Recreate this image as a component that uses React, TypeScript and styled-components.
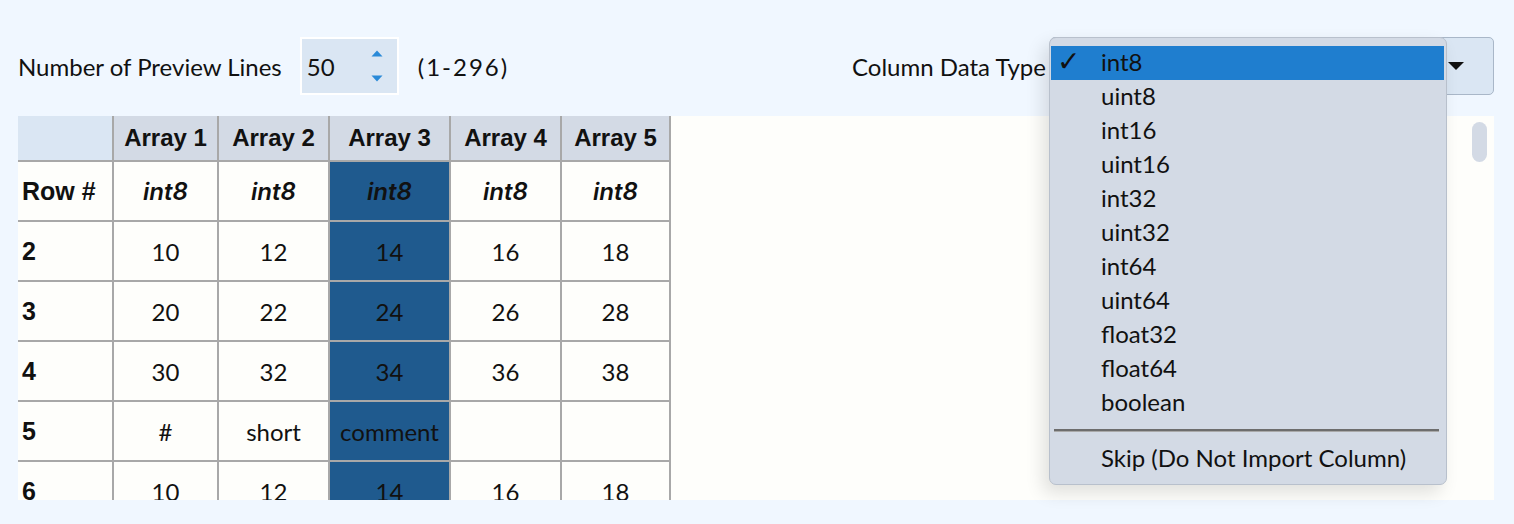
import React from "react";
import styled, { createGlobalStyle } from "styled-components";

const columns = ["Array 1", "Array 2", "Array 3", "Array 4", "Array 5"];
const columnWidths = [95, 105, 111, 121, 111, 109];
const selectedColumn = 2;

const rows: { id: string; values: string[] }[] = [
  { id: "2", values: ["10", "12", "14", "16", "18"] },
  { id: "3", values: ["20", "22", "24", "26", "28"] },
  { id: "4", values: ["30", "32", "34", "36", "38"] },
  { id: "5", values: ["#", "short", "comment", "", ""] },
  { id: "6", values: ["10", "12", "14", "16", "18"] },
];

const dataTypes = [
  "int8",
  "uint8",
  "int16",
  "uint16",
  "int32",
  "uint32",
  "int64",
  "uint64",
  "float32",
  "float64",
  "boolean",
];

const GlobalStyle = createGlobalStyle`
  html, body {
    margin: 0;
    padding: 0;
    background: #f0f7ff;
  }
  body {
    font-family: Lato, "Noto Sans", sans-serif;
    color: #111;
  }
`;

function App() {
  return (
    <Page>
      <GlobalStyle />
      <Toolbar>
        <Group>
          <Label>Number of Preview Lines</Label>
          <Spinner>
            <SpinnerValue>50</SpinnerValue>
            <SpinnerArrows>
              <svg width="14" height="34" viewBox="0 0 14 34">
                <path d="M1.5 7.5 L7 1.5 L12.5 7.5 Z" fill="#2a8ad8" />
                <path d="M1.5 26.5 L7 32.5 L12.5 26.5 Z" fill="#2a8ad8" />
              </svg>
            </SpinnerArrows>
          </Spinner>
          <Range>(1-296)</Range>
        </Group>
        <Group $gap={4}>
          <Label>Column Data Type</Label>
          <SelectWrap>
            <SelectBox>
              <svg width="16" height="8" viewBox="0 0 16 8">
                <path d="M0 0 L16 0 L8 8 Z" fill="#111" />
              </svg>
            </SelectBox>
            <Menu>
              {dataTypes.map((t, i) => (
                <MenuItem key={t} $active={i === 0}>
                  <Check>{i === 0 ? "✓" : ""}</Check>
                  {t}
                </MenuItem>
              ))}
              <Separator />
              <MenuItem>
                <Check />
                Skip (Do Not Import Column)
              </MenuItem>
            </Menu>
          </SelectWrap>
        </Group>
      </Toolbar>
      <Panel>
        <Table>
          <colgroup>
            {columnWidths.map((w, i) => (
              <col key={i} style={{ width: w }} />
            ))}
          </colgroup>
          <thead>
            <tr>
              <Corner />
              {columns.map((c) => (
                <HeadCell key={c}>{c}</HeadCell>
              ))}
            </tr>
          </thead>
          <tbody>
            <tr>
              <RowLabel>Row #</RowLabel>
              {columns.map((c, i) => (
                <TypeCell key={c} $selected={i === selectedColumn}>
                  int8
                </TypeCell>
              ))}
            </tr>
            {rows.map((r) => (
              <tr key={r.id}>
                <RowLabel>{r.id}</RowLabel>
                {r.values.map((v, i) => (
                  <Cell key={i} $selected={i === selectedColumn}>
                    {v}
                  </Cell>
                ))}
              </tr>
            ))}
          </tbody>
        </Table>
        <ScrollThumb />
      </Panel>
    </Page>
  );
}

const Page = styled.div`
  width: 1514px;
  height: 524px;
  overflow: hidden;
  background: #f0f7ff;
`;

const Toolbar = styled.div`
  display: flex;
  justify-content: space-between;
  align-items: center;
  padding: 37px 20px 0 18px;
  height: 58px;
  margin-bottom: 21px;
`;

const Group = styled.div<{ $gap?: number }>`
  display: flex;
  align-items: center;
  gap: ${(p) => p.$gap ?? 18}px;
`;

const Label = styled.span`
  font-size: 24px;
  color: #111;
`;

const Spinner = styled.div`
  box-sizing: border-box;
  width: 99px;
  height: 58px;
  border: 2px solid #ffffff;
  background: #dae6f3;
  display: flex;
  align-items: center;
  justify-content: space-between;
  padding: 0 13px 0 5px;
`;

const SpinnerValue = styled.span`
  font-size: 24px;
`;

const SpinnerArrows = styled.span`
  display: flex;
`;

const Range = styled.span`
  font-size: 24px;
  letter-spacing: 2px;
  margin-left: 1px;
`;

const SelectWrap = styled.div`
  position: relative;
`;

const SelectBox = styled.div`
  box-sizing: border-box;
  width: 444px;
  height: 58px;
  background: #dae6f3;
  border: 1px solid #a9b7c8;
  border-radius: 5px;
  display: flex;
  align-items: center;
  justify-content: flex-end;
  padding-right: 29px;
`;

const Menu = styled.div`
  position: absolute;
  left: -1px;
  top: 0;
  width: 398px;
  box-sizing: border-box;
  padding: 8px 2px 8px 1px;
  background: #d3dae5;
  border: 1px solid #b8c0cc;
  border-radius: 7px;
  box-shadow: -6px 8px 18px rgba(0, 0, 0, 0.12);
  z-index: 2;
`;

const MenuItem = styled.div<{ $active?: boolean }>`
  box-sizing: border-box;
  display: flex;
  align-items: center;
  height: 34px;
  padding-bottom: 3px;
  font-size: 24px;
  color: #111;
  background: ${(p) => (p.$active ? "#1f7ecf" : "transparent")};
`;

const Check = styled.span`
  width: 50px;
  padding-left: 6px;
  box-sizing: border-box;
  font-size: 28px;
  line-height: 1;
  font-family: "DejaVu Sans", sans-serif;
`;

const Separator = styled.div`
  margin: 9px 5px 10px 3px;
  height: 2px;
  background: #6d6d6d;
  border-bottom: 1px solid #a9a9a9;
`;

const Panel = styled.div`
  position: relative;
  margin: 0 20px 0 18px;
  height: 384px;
  overflow: hidden;
  background: #fefefb;
`;

const Table = styled.table`
  border-collapse: collapse;
  table-layout: fixed;
  width: 652px;
  font-size: 24px;

  td,
  th {
    border: 2px solid #a8a8a8;
    padding: 0;
  }

  tr > :first-child {
    border-left: none;
  }

  thead th {
    border-top: none;
  }
`;

const Corner = styled.th`
  background: #dae6f3;
  height: 44px;
`;

const HeadCell = styled.th`
  background: #d3dae5;
  height: 44px;
  font-family: "Liberation Sans", Arial, sans-serif;
  font-weight: 700;
  font-size: 24px;
  text-align: center;
`;

const RowLabel = styled.td`
  height: 58px;
  padding-left: 4px !important;
  font-family: "Liberation Sans", Arial, sans-serif;
  font-weight: 700;
  font-size: 25px;
  text-align: left;
`;

const Cell = styled.td<{ $selected?: boolean }>`
  height: 58px;
  text-align: center;
  font-family: Lato, sans-serif;
  font-size: 24px;
  background: ${(p) => (p.$selected ? "#1f5a8e" : "transparent")};
`;

const TypeCell = styled(Cell)`
  font-family: Inter, "Liberation Sans", sans-serif;
  font-style: italic;
  font-weight: 600;
`;

const ScrollThumb = styled.div`
  position: absolute;
  top: 6px;
  right: 7px;
  width: 15px;
  height: 40px;
  border-radius: 8px;
  background: #d3dae5;
`;

export default App;
